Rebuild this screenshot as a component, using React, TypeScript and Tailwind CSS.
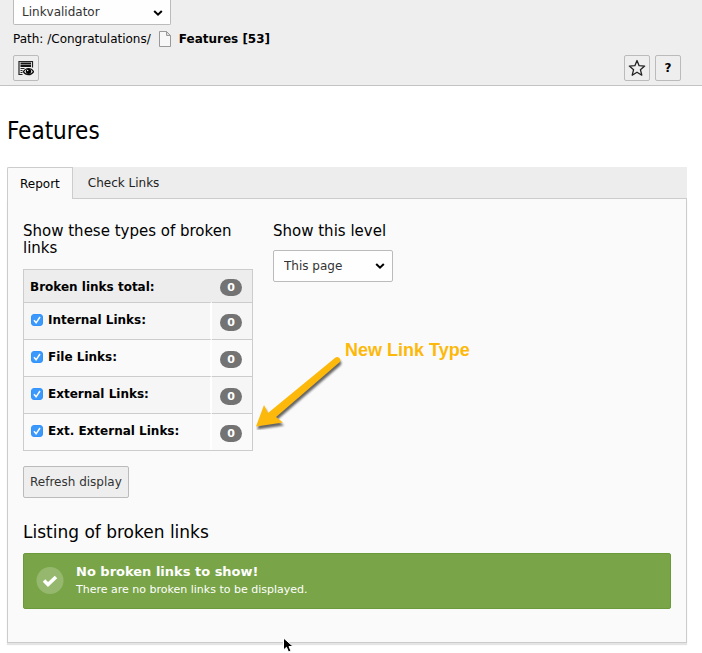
import type { ReactNode } from "react";

const linkTypes = [
  { id: "internal", label: "Internal Links:", count: 0 },
  { id: "file", label: "File Links:", count: 0 },
  { id: "external", label: "External Links:", count: 0 },
  { id: "ext-external", label: "Ext. External Links:", count: 0 },
];

function Chevron() {
  return (
    <svg
      className="pointer-events-none absolute top-1/2 right-2 -translate-y-1/2"
      width="10"
      height="8"
      viewBox="0 0 10 8"
      fill="none"
      stroke="#000"
      strokeWidth="2"
      aria-hidden="true"
    >
      <path d="M1.200 2 5 5.700 8.800 2" />
    </svg>
  );
}

function Badge({ children }: { children: ReactNode }) {
  return (
    <span className="block h-[17px] w-[22px] rounded-full bg-[#737373] text-center text-[11px] leading-[17px] font-bold text-white">
      {children}
    </span>
  );
}

function ToolButton({ label, children }: { label: string; children: ReactNode }) {
  return (
    <button
      type="button"
      aria-label={label}
      className="flex size-[26px] items-center justify-center rounded-xs border border-[#bbb] bg-[#eee] text-xs font-bold"
    >
      {children}
    </button>
  );
}

function Header() {
  return (
    <header className="border-b border-[#c3c3c3] bg-[#eee] pr-[21px] pb-1 pl-[13px]">
      <div className="relative w-[158px]">
        <select
          aria-label="Module function"
          className="block h-[25px] w-full appearance-none rounded-b-xs border border-t-0 border-[#bbb] bg-[#fefefe] px-2 text-xs text-[#333]"
        >
          <option>Linkvalidator</option>
        </select>
        <Chevron />
      </div>
      <div className="mt-1 flex h-5 items-center">
        <span>Path: /Congratulations/</span>
        <svg className="mx-2" width="12" height="16" viewBox="0 0 12 16" aria-hidden="true">
          <path d="M.5.5h7l4 4v11H.5z" fill="#f7f7f7" stroke="#999" />
          <path d="M7.5.5v4h4z" fill="#ddd" stroke="#999" />
        </svg>
        <strong>Features [53]</strong>
      </div>
      <div className="mt-[6px] flex gap-[5px]">
        <ToolButton label="View list">
          <svg className="shrink-0" width="16" height="16" viewBox="0 0 16 16" aria-hidden="true">
            <path d="M1 15V1.500h13.500V7.500M1 14.500H4.500" fill="none" stroke="#222" strokeWidth="1.200" />
            <path d="M2.500 3.500h10.500M2.500 6h10.500" stroke="#111" strokeWidth="1.800" />
            <path d="M2.500 8.500h4M2.500 10.500h2M2.500 12.500h2" stroke="#222" />
            <path
              d="M5.300 11.700c2.600-4.300 7.700-4.300 10.300 0-2.600 4-7.700 4-10.300 0Z"
              fill="#eee"
              stroke="#111"
              strokeWidth="1.200"
            />
            <circle cx="10.500" cy="11.300" r="2.600" fill="#000" />
            <circle cx="9.700" cy="10.500" r=".7" fill="#fff" />
          </svg>
        </ToolButton>
        <div className="grow" />
        <ToolButton label="Bookmark">
          <svg className="shrink-0" width="18" height="18" viewBox="0 0 18 18" aria-hidden="true">
            <path
              d="m9 1.500 2.100 5.200 5.600.4-4.300 3.600 1.400 5.500L9 13.200l-4.800 3 1.400-5.500-4.300-3.600 5.600-.4Z"
              fill="none"
              stroke="#222"
              strokeWidth="1.300"
              strokeLinejoin="round"
            />
          </svg>
        </ToolButton>
        <ToolButton label="Help">?</ToolButton>
      </div>
    </header>
  );
}

function LinkTable() {
  return (
    <table className="mt-3 w-full border-separate border-spacing-0 border border-[#ccc] text-left">
      <thead className="bg-[#ededed]">
        <tr className="h-8">
          <th scope="col" className="pt-[2px] pl-[6px] font-bold">
            Broken links total:
          </th>
          <th scope="col" className="w-10 pt-[2px] pl-2 align-middle">
            <Badge>0</Badge>
          </th>
        </tr>
      </thead>
      <tbody>
        {linkTypes.map((type) => (
          <tr key={type.id} className="h-[37px] odd:bg-[#f6f6f6]">
            <td className="border-t border-r-2 border-t-[#ccc] border-r-white pb-[2px] pl-[7px]">
              <div className="flex items-center">
                <span className="relative size-3">
                  <input
                    id={type.id}
                    type="checkbox"
                    defaultChecked
                    className="peer block size-3 appearance-none rounded-[3px] border border-[#aaa] bg-white checked:border-[#3293fc] checked:bg-[#3b99fc]"
                  />
                  <svg
                    className="pointer-events-none absolute inset-0 hidden peer-checked:block"
                    width="12"
                    height="12"
                    viewBox="0 0 12 12"
                    fill="none"
                    stroke="#fff"
                    strokeWidth="1.500"
                    aria-hidden="true"
                  >
                    <path d="m3 6.300 2.100 2.500L9 3" />
                  </svg>
                </span>
                <label htmlFor={type.id} className="pl-[5px] font-bold">
                  {type.label}
                </label>
              </div>
            </td>
            <td className="border-t border-[#ccc] pt-[2px] pl-2 align-middle">
              <Badge>{type.count}</Badge>
            </td>
          </tr>
        ))}
      </tbody>
    </table>
  );
}

function Annotation() {
  return (
    <div className="pointer-events-none absolute top-[141px] left-[248px]">
      <svg width="94" height="90" viewBox="0 0 94 90" aria-hidden="true">
        <g className="drop-shadow-[1px_3px_1px_rgba(0,0,0,0.6)]">
          <path
            d="M79.500 17.500c2.400-2 6.800 1.700 4 4.700L20 77l7 5.500-27 4 8-21.500 4 8Z"
            fill="#fdb90b"
          />
        </g>
      </svg>
      <span className="absolute top-0 left-[89px] font-['Liberation_Sans',Arial,sans-serif] text-lg leading-5 font-bold whitespace-nowrap text-[#fdb90b]">
        New Link Type
      </span>
    </div>
  );
}

export default function App() {
  return (
    <div className="relative min-h-screen bg-white font-['DejaVu_Sans',Verdana,sans-serif] text-xs leading-4 text-black">
      <Header />
      <main className="pr-[15px] pb-[10px] pl-[7px]">
        <h1 className="pt-[29px] pb-5 font-['DejaVu_Sans_Condensed','DejaVu_Sans',sans-serif] text-2xl leading-8">
          Features
        </h1>
        <div role="tablist" className="flex h-8 bg-[#ededed] text-xs">
          <button
            type="button"
            role="tab"
            aria-selected="true"
            className="rounded-tl-xs border border-b-0 border-[#ccc] bg-[#fafafa] px-3"
          >
            Report
          </button>
          <button
            type="button"
            role="tab"
            aria-selected="false"
            className="grow border-b border-[#ccc] px-[15px] text-left text-[#222]"
          >
            Check Links
          </button>
        </div>
        <section
          role="tabpanel"
          className="relative border border-t-0 border-[#ccc] bg-[#fafafa] px-[15px] pt-6 pb-[33px] shadow-[0_2px_1px_#e4e4e4]"
        >
          <div className="flex gap-5">
            <div className="w-[230px]">
              <h2 className="text-[15px] leading-[17px]">Show these types of broken links</h2>
              <LinkTable />
            </div>
            <div>
              <h2 className="text-[15px] leading-[17px]">Show this level</h2>
              <div className="relative mt-[10px] w-[120px]">
                <select
                  aria-label="Show this level"
                  className="block h-8 w-full appearance-none rounded-xs border border-[#bbb] bg-[#fefefe] px-[10px] text-xs text-[#333]"
                >
                  <option>This page</option>
                </select>
                <Chevron />
              </div>
            </div>
          </div>
          <button
            type="button"
            className="mt-[15px] block h-8 rounded-xs border border-[#bbb] bg-[#eee] px-[6px] text-xs text-[#333]"
          >
            Refresh display
          </button>
          <h2 className="mt-6 text-[17px] leading-5">Listing of broken links</h2>
          <div
            role="status"
            className="mt-[11px] flex h-14 items-center gap-3 rounded-xs border border-[#6b9a3b] bg-[#79a548] px-3 text-white"
          >
            <svg width="28" height="28" viewBox="0 0 28 28" aria-hidden="true">
              <circle cx="14" cy="13.500" r="13.500" fill="#95b86e" />
              <path d="m8 13.500 4 4 8-7.500" fill="none" stroke="#fff" strokeWidth="3.600" />
            </svg>
            <div>
              <p className="text-[13px] leading-[18px] font-bold">No broken links to show!</p>
              <p className="text-[11px] leading-[18px]">There are no broken links to be displayed.</p>
            </div>
          </div>
          <Annotation />
        </section>
      </main>
      <svg
        className="pointer-events-none absolute top-[637px] left-[282px]"
        width="12"
        height="16"
        viewBox="0 0 12 16"
        aria-hidden="true"
      >
        <path d="M1.500 1v12l3-2.700 2 4.700 2.500-1-2-4.500h4.200Z" fill="#000" stroke="#fff" />
      </svg>
    </div>
  );
}
